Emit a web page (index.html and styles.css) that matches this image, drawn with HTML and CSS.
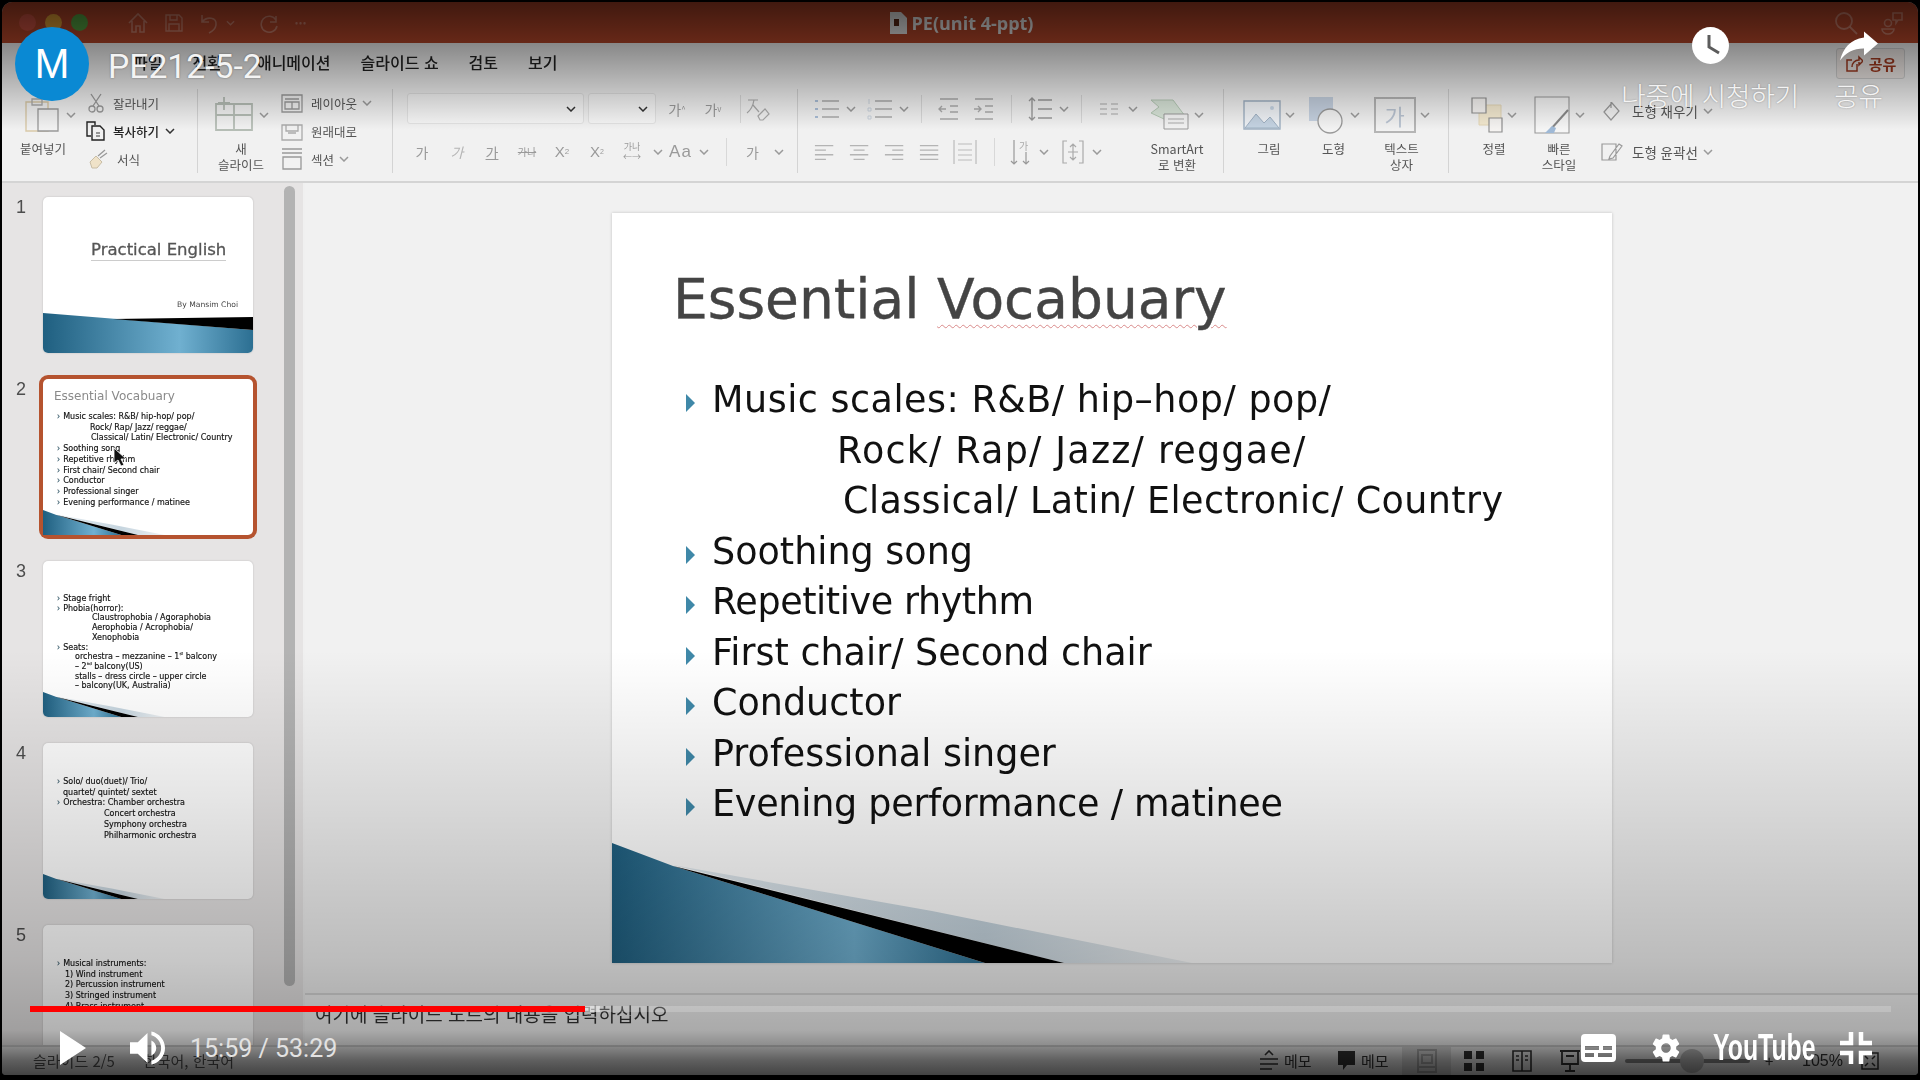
FILE: index.html
```html
<!DOCTYPE html>
<html lang="ko">
<head>
    <meta charset="UTF-8">
    <title>PE212-5-2</title>
    <link rel="stylesheet" href="styles.css">
</head>
<body>
<svg class="defs" width="0" height="0">
    <symbol id="chev" viewBox="0 0 10 6"><polyline points="1,1 5,5 9,1" fill="none" stroke="currentColor" stroke-width="1.5"/></symbol>
    <symbol id="center" viewBox="0 0 24 20"><path d="M1 3h20M5 8h12M1 13h20M5 18h12" stroke="currentColor" stroke-width="1.5" fill="none"/></symbol>
    <symbol id="left" viewBox="0 0 24 20"><path d="M1 3h20M1 8h12M1 13h20M1 18h12" stroke="currentColor" stroke-width="1.5" fill="none"/></symbol>
    <symbol id="right" viewBox="0 0 24 20"><path d="M1 3h20M9 8h12M1 13h20M9 18h12" stroke="currentColor" stroke-width="1.5" fill="none"/></symbol>
    <symbol id="justify" viewBox="0 0 24 20"><path d="M1 3h20M1 8h20M1 13h20M1 18h20" stroke="currentColor" stroke-width="1.5" fill="none"/></symbol>
    <linearGradient id="blue" x1="0" x2="1" y1="0" y2="0">
        <stop offset="0" stop-color="#1f5f80"/>
        <stop offset=".65" stop-color="#70b0d0"/>
        <stop offset="1" stop-color="#2c6f92"/>
    </linearGradient>
    <linearGradient id="pale" x1="0" x2="1" y1="0" y2="0">
        <stop offset="0" stop-color="#e4ecf1"/>
        <stop offset=".6" stop-color="#c6d5df"/>
        <stop offset="1" stop-color="#eef1f3"/>
    </linearGradient>
    <symbol id="swoosh" viewBox="0 0 1000 120" preserveAspectRatio="none">
        <polygon points="61,22 320,68 580,120 452,120" fill="url(#pale)"/>
        <polygon points="0,0 61,23 373,120 0,120" fill="url(#blue)"/>
        <polygon points="61,23 452,120 373,120" fill="#000"/>
    </symbol>
</svg>

<div class="player">
    <div class="app">
        <header class="titlebar">
            <div class="title-left">
                <span class="light light-red"></span>
                <span class="light light-yellow"></span>
                <span class="light light-green"></span>
                <div class="quick">
                    <svg width="22" height="22" viewBox="0 0 22 22" fill="none" stroke="currentColor" stroke-width="1.6"><path d="M2 11L11 2l9 9M5 9v11h4v-6h4v6h4V9"/></svg>
                    <svg width="20" height="20" viewBox="0 0 20 20" fill="none" stroke="currentColor" stroke-width="1.4"><path d="M2 2h13l3 3v13H2zM6 2v5h7V2M5 18v-7h10v7"/></svg>
                    <svg width="22" height="22" viewBox="0 0 22 22" fill="none" stroke="currentColor" stroke-width="1.6"><path d="M3 3v7h7M3 10c5-6 15-5 14 3-.4 3-3 6-7 8"/></svg>
                    <svg class="quick-chev" width="9" height="6"><use href="#chev"/></svg>
                    <svg width="22" height="22" viewBox="0 0 22 22" fill="none" stroke="currentColor" stroke-width="1.6"><path d="M18 4v6h-6M18 8a8 8 0 1 0 1 6"/></svg>
                    <span class="quick-dots">•••</span>
                </div>
            </div>
            <div class="doc-title">
                <svg width="17" height="22" viewBox="0 0 17 22"><path d="M0 0h11l6 6v16H0z" fill="currentColor"/><path d="M4 7h5v7H4z" fill="#5c2714"/></svg>
                <span>PE(unit 4-ppt)</span>
            </div>
            <div class="title-right">
                <svg width="24" height="24" viewBox="0 0 24 24" fill="none" stroke="currentColor" stroke-width="1.8"><circle cx="10" cy="10" r="8"/><path d="M16 16l7 7"/></svg>
                <svg width="24" height="24" viewBox="0 0 24 24" fill="none" stroke="currentColor" stroke-width="1.6"><circle cx="8" cy="12" r="3.5"/><path d="M2 18h12c0 3-3 5-6 5s-6-2-6-5zM13 2h9v7h-4l-2 3V9h-3z"/></svg>
            </div>
        </header>

        <section class="ribbon">
            <nav class="tabs">
                <span class="tab">파일</span>
                <span class="tab tab-wider">전환</span>
                <span class="tab">애니메이션</span>
                <span class="tab">슬라이드 쇼</span>
                <span class="tab">검토</span>
                <span class="tab">보기</span>
            </nav>
            <div class="groups">
                <div class="group group-paste">
                    <div class="big big-paste">
                        <div class="big-icon">
                            <svg width="38" height="36" viewBox="0 0 38 36" fill="none"><path d="M2 5h22v29H2z" stroke="#d9c9a8" stroke-width="1.4"/><path d="M8 2h10v6H8z" stroke="#aaa" stroke-width="1.3"/><path d="M14 12h20v22H14z" fill="#f2f2f2" stroke="#999" stroke-width="1.3"/></svg>
                            <svg class="chev" width="10" height="6"><use href="#chev"/></svg>
                        </div>
                        <div class="big-label">붙여넣기</div>
                    </div>
                    <div class="small-list">
                        <div class="small-row">
                            <svg width="16" height="20" viewBox="0 0 16 20" fill="none" stroke="#999" stroke-width="1.3"><path d="M3 1l8 12M13 1L5 13"/><circle cx="4" cy="16" r="3"/><circle cx="12" cy="16" r="3"/></svg>
                            <span>잘라내기</span>
                        </div>
                        <div class="small-row small-strong">
                            <svg width="20" height="20" viewBox="0 0 20 20" fill="none" stroke="#222" stroke-width="1.4"><path d="M5 15H1V1h8v3"/><path d="M6 5h8l4 4v10H6z"/><path d="M10 12h4M10 15h4" stroke="#777"/></svg>
                            <span>복사하기</span>
                            <svg class="chev chev-dark" width="10" height="6"><use href="#chev"/></svg>
                        </div>
                        <div class="small-row">
                            <svg width="20" height="20" viewBox="0 0 20 20" fill="none"><path d="M2 13l6-6 6 6-5 6H4z" fill="#efe2c8" stroke="#c8bda5"/><path d="M10 7l7-6M12 9l7-5" stroke="#999" stroke-width="1.3"/></svg>
                            <span>서식</span>
                        </div>
                    </div>
                </div>

                <div class="group group-slide">
                    <div class="big big-new">
                        <div class="big-icon">
                            <svg width="42" height="36" viewBox="0 0 42 36" fill="none" stroke="#b5bdb5" stroke-width="1.8"><path d="M3 7h36v26H3zM21 7v26M3 18h36M11 0v13M5 6h12"/></svg>
                            <svg class="chev" width="10" height="6"><use href="#chev"/></svg>
                        </div>
                        <div class="big-label">새<br>슬라이드</div>
                    </div>
                    <div class="small-list small-list-slide">
                        <div class="small-row">
                            <svg width="22" height="19" viewBox="0 0 22 19" fill="none" stroke="#999" stroke-width="1.3"><path d="M1 1h20v17H1zM4 5h14M4 8h14v7H4zM11 8v7"/></svg>
                            <span>레이아웃</span>
                            <svg class="chev" width="10" height="6"><use href="#chev"/></svg>
                        </div>
                        <div class="small-row">
                            <svg width="22" height="19" viewBox="0 0 22 19" fill="none" stroke="#aaa" stroke-width="1.3"><path d="M1 3h20v15H1zM5 3v6h12V3M7 11h8"/></svg>
                            <span>원래대로</span>
                        </div>
                        <div class="small-row">
                            <svg width="22" height="22" viewBox="0 0 22 22" fill="none" stroke="#999" stroke-width="1.3"><path d="M1 1h20M1 5h20M2 9h18v12H2z"/></svg>
                            <span>섹션</span>
                            <svg class="chev" width="10" height="6"><use href="#chev"/></svg>
                        </div>
                    </div>
                </div>

                <div class="group group-font">
                    <div class="tool-rows">
                        <div class="tool-row">
                            <div class="select select-font"><svg class="chev chev-dark" width="10" height="6"><use href="#chev"/></svg></div>
                            <div class="select select-size"><svg class="chev chev-dark" width="10" height="6"><use href="#chev"/></svg></div>
                            <span class="tool w36 ml3">가<sup>^</sup></span>
                            <span class="tool w36">가<sup>v</sup></span>
                            <span class="vsep vsep-font"></span>
                            <span class="tool w34">
                                <svg width="26" height="26" viewBox="0 0 26 26" fill="none" stroke="#aaa" stroke-width="1.2"><path d="M13 20l7-7 4 5-6 6h-3zM3 4h10M9 4c-1 6-3 10-7 13M8 9l6 7"/></svg>
                            </span>
                        </div>
                        <div class="tool-row row-shift">
                            <span class="tool w35">가</span>
                            <span class="tool w35 tool-italic">가</span>
                            <span class="tool w35 tool-under">가</span>
                            <span class="tool w35 tool-strike">가나</span>
                            <span class="tool w35 tool-latin">X<sup>2</sup></span>
                            <span class="tool w35 tool-latin">X<sub>2</sub></span>
                            <span class="tool w35 tool-tiny">가나<br>←→</span>
                            <span class="chev-slot"><svg class="chev" width="10" height="6"><use href="#chev"/></svg></span>
                            <span class="tool w30 tool-aa">Aa</span>
                            <span class="chev-slot"><svg class="chev" width="10" height="6"><use href="#chev"/></svg></span>
                            <span class="vsep vsep-color"></span>
                            <span class="tool w36 ml8">가</span>
                            <span class="chev-slot"><svg class="chev" width="10" height="6"><use href="#chev"/></svg></span>
                        </div>
                    </div>
                </div>

                <div class="group group-para">
                    <div class="tool-rows para-rows">
                        <div class="tool-row para-top">
                            <span class="tool w32">
                                <svg width="26" height="24" viewBox="0 0 26 24"><path d="M8 4h17M8 12h17M8 20h17" stroke="#aaa" stroke-width="1.5"/><path d="M1 3h3v2H1zM1 11h3v2H1zM1 19h3v2H1z" fill="#a9bdd6"/></svg>
                            </span>
                            <span class="chev-slot"><svg class="chev" width="10" height="6"><use href="#chev"/></svg></span>
                            <span class="tool w32 ml5">
                                <svg width="26" height="24" viewBox="0 0 26 24"><path d="M8 4h17M8 12h17M8 20h17" stroke="#aaa" stroke-width="1.5"/><path d="M2 2v5M1 11h3v3H1zM1 19h3v3H1z" stroke="#c9d2dc" fill="none"/></svg>
                            </span>
                            <span class="chev-slot"><svg class="chev" width="10" height="6"><use href="#chev"/></svg></span>
                            <span class="vsep ml9"></span>
                            <span class="tool w35 ml9">
                                <svg width="22" height="24" viewBox="0 0 22 24" fill="none" stroke="#aaa" stroke-width="1.4"><path d="M2 2h18M12 9h8M12 15h8M2 22h18M8 12H1M4 9l-3 3 3 3"/></svg>
                            </span>
                            <span class="tool w35">
                                <svg width="22" height="24" viewBox="0 0 22 24" fill="none" stroke="#aaa" stroke-width="1.4"><path d="M2 2h18M12 9h8M12 15h8M2 22h18M1 12h7M5 9l3 3-3 3"/></svg>
                            </span>
                            <span class="vsep ml10"></span>
                            <span class="tool w32 ml12">
                                <svg width="24" height="26" viewBox="0 0 24 26" fill="none" stroke="#999" stroke-width="1.4"><path d="M10 4h14M10 13h14M10 22h14M4 2v22M1 5l3-3 3 3M1 21l3 3 3-3"/></svg>
                            </span>
                            <span class="chev-slot"><svg class="chev" width="10" height="6"><use href="#chev"/></svg></span>
                            <span class="vsep ml9"></span>
                            <span class="tool w32 ml11">
                                <svg width="18" height="14" viewBox="0 0 18 14" stroke="#c0c0c0" stroke-width="1.3" fill="none"><path d="M0 2h7M0 7h7M0 12h7M11 2h7M11 7h7M11 12h7"/></svg>
                            </span>
                            <span class="chev-slot"><svg class="chev" width="10" height="6"><use href="#chev"/></svg></span>
                        </div>
                        <div class="tool-row row-para-bottom">
                            <span class="tool w35"><svg class="align-icon" width="22" height="20"><use href="#left"/></svg></span>
                            <span class="tool w35"><svg class="align-icon" width="22" height="20"><use href="#center"/></svg></span>
                            <span class="tool w35"><svg class="align-icon" width="22" height="20"><use href="#right"/></svg></span>
                            <span class="tool w35"><svg class="align-icon" width="22" height="20"><use href="#justify"/></svg></span>
                            <span class="tool w35">
                                <svg width="24" height="26" viewBox="0 0 24 26" fill="none" stroke="#bbb" stroke-width="1.2"><path d="M1 1v24M23 1v24M5 5h14M5 11h14M5 16h14M5 21h14"/></svg>
                            </span>
                            <span class="vsep ml11"></span>
                            <span class="tool w32 ml9">
                                <svg width="20" height="28" viewBox="0 0 20 28" fill="none" stroke="#999" stroke-width="1.2"><path d="M4 2v24M1 23l3 3 3-3M16 14v12M13 23l3 3 3-3"/><text x="9" y="12" font-size="10" fill="#aaa" stroke="none">가</text></svg>
                            </span>
                            <span class="chev-slot"><svg class="chev" width="10" height="6"><use href="#chev"/></svg></span>
                            <span class="tool w32 ml5">
                                <svg width="24" height="26" viewBox="0 0 24 26" fill="none" stroke="#aaa" stroke-width="1.2"><path d="M6 2H2v22h4M18 2h4v22h-4M12 5v16M9 8l3-3 3 3M9 18l3 3 3-3M7 13h10"/></svg>
                            </span>
                            <span class="chev-slot"><svg class="chev" width="10" height="6"><use href="#chev"/></svg></span>
                        </div>
                    </div>
                    <div class="big big-smart">
                        <div class="big-icon">
                            <svg width="40" height="32" viewBox="0 0 40 32"><path d="M1 1h22l12 16H26L14 20 1 14l8-6z" fill="#d8e4d8" stroke="#b4c8b4"/><path d="M14 15h24v15H14z" fill="#f2f2f2" stroke="#999"/><path d="M18 20h16M18 24h16" stroke="#aaa"/></svg>
                            <svg class="chev" width="10" height="6"><use href="#chev"/></svg>
                        </div>
                        <div class="big-label">SmartArt<br>로 변환</div>
                    </div>
                </div>

                <div class="group group-insert">
                    <div class="big big-pic">
                        <div class="big-icon">
                            <svg width="38" height="30" viewBox="0 0 38 30"><path d="M1 1h36v28H1z" fill="#eef1f5" stroke="#9fb0c2" stroke-width="1.4"/><path d="M2 28l11-14 8 9 6-6 9 11z" fill="#c4d3e2" stroke="#9fb0c2"/><circle cx="29" cy="8" r="2" fill="#c4d3e2"/></svg>
                            <svg class="chev" width="10" height="6"><use href="#chev"/></svg>
                        </div>
                        <div class="big-label">그림</div>
                    </div>
                    <div class="big big-shape">
                        <div class="big-icon">
                            <svg width="38" height="38" viewBox="0 0 38 38"><path d="M1 1h24v24H1z" fill="#c5d1e0"/><circle cx="22" cy="25" r="12" fill="#f3f3f3" stroke="#999" stroke-width="1.3"/></svg>
                            <svg class="chev" width="10" height="6"><use href="#chev"/></svg>
                        </div>
                        <div class="big-label">도형</div>
                    </div>
                    <div class="big big-textbox">
                        <div class="big-icon">
                            <div class="textbox-icon">가</div>
                            <svg class="chev" width="10" height="6"><use href="#chev"/></svg>
                        </div>
                        <div class="big-label">텍스트<br>상자</div>
                    </div>
                </div>

                <div class="group group-arrange">
                    <div class="big big-arrange">
                        <div class="big-icon">
                            <svg width="32" height="36" viewBox="0 0 32 36"><path d="M8 8h22v20H8z" fill="#f2e8cf" stroke="#e3d6b6"/><path d="M1 1h14v15H1zM18 21h13v14H18z" fill="#f5f3f1" stroke="#8f8f8f" stroke-width="1.2"/></svg>
                            <svg class="chev" width="10" height="6"><use href="#chev"/></svg>
                        </div>
                        <div class="big-label">정렬</div>
                    </div>
                    <div class="big big-quick">
                        <div class="big-icon">
                            <svg width="38" height="38" viewBox="0 0 38 38"><path d="M2 1h34v36H2z" fill="#f5f5f5" stroke="#999" stroke-width="1.1"/><path d="M35 14L18 33" stroke="#888" stroke-width="2"/><path d="M19 30l-7 7h9l2-5z" fill="#9fb9d6"/></svg>
                            <svg class="chev" width="10" height="6"><use href="#chev"/></svg>
                        </div>
                        <div class="big-label">빠른<br>스타일</div>
                    </div>
                    <div class="small-list small-list-shape">
                        <div class="small-row">
                            <svg width="20" height="22" viewBox="0 0 20 22" fill="none" stroke="#999" stroke-width="1.2"><path d="M2 12l8-9 7 8-8 9zM9 2v6"/></svg>
                            <span>도형 채우기</span>
                            <svg class="chev" width="10" height="6"><use href="#chev"/></svg>
                        </div>
                        <div class="small-row">
                            <svg width="22" height="20" viewBox="0 0 22 20" fill="none" stroke="#999" stroke-width="1.2"><path d="M1 2h14v16H1zM9 14l9-12 3 2-9 12-4 1z"/></svg>
                            <span>도형 윤곽선</span>
                            <svg class="chev" width="10" height="6"><use href="#chev"/></svg>
                        </div>
                    </div>
                </div>
            </div>
            <div class="share-btn">
                <svg width="18" height="18" viewBox="0 0 18 18" fill="none" stroke="currentColor" stroke-width="1.5"><path d="M12 9v7H2V5h5M7 12c0-4 3-7 7-7V2l4 4-4 4V7"/></svg>
                <span>공유</span>
            </div>
        </section>

        <main class="workspace">
            <aside class="thumbs">
                <div class="thumb-list">
                    <div class="thumb-item">
                        <span class="thumb-num">1</span>
                        <div class="thumb">
                            <div class="mini-title-page">Practical English</div>
                            <div class="mini-byline">By Mansim Choi</div>
                            <svg class="cover-art" viewBox="0 0 210 40" preserveAspectRatio="none">
                                <polygon points="0,0 210,17 210,40 0,40" fill="url(#blue)"/>
                                <polygon points="70,6 210,4 210,17" fill="#000"/>
                            </svg>
                        </div>
                    </div>
                    <div class="thumb-item">
                        <span class="thumb-num">2</span>
                        <div class="thumb thumb-active">
                            <div class="mini-title">Essential Vocabuary</div>
                            <ul class="mini-text mini-text-2">
                                <li class="bul">Music scales: R&amp;B/ hip-hop/ pop/</li>
                                <li class="in-a">Rock/ Rap/ Jazz/ reggae/</li>
                                <li class="in-b">Classical/ Latin/ Electronic/ Country</li>
                                <li class="bul">Soothing song</li>
                                <li class="bul">Repetitive rhythm</li>
                                <li class="bul">First chair/ Second chair</li>
                                <li class="bul">Conductor</li>
                                <li class="bul">Professional singer</li>
                                <li class="bul">Evening performance / matinee</li>
                            </ul>
                            <svg class="mini-swoosh"><use href="#swoosh"/></svg>
                            <svg class="cursor" width="14" height="20" viewBox="0 0 14 20"><path d="M1 1v15l4-3 3 6 3-1-3-6h5z" fill="#111" stroke="#fff" stroke-width=".8"/></svg>
                        </div>
                    </div>
                    <div class="thumb-item">
                        <span class="thumb-num">3</span>
                        <div class="thumb">
                            <ul class="mini-text mini-text-3">
                                <li class="bul">Stage fright</li>
                                <li class="bul">Phobia(horror):</li>
                                <li class="in-c">Claustrophobia / Agoraphobia</li>
                                <li class="in-c">Aerophobia / Acrophobia/</li>
                                <li class="in-c">Xenophobia</li>
                                <li class="bul">Seats:</li>
                                <li class="in-d">orchestra – mezzanine – 1<sup>st</sup> balcony</li>
                                <li class="in-d">– 2<sup>nd</sup> balcony(US)</li>
                                <li class="in-d">stalls – dress circle – upper circle</li>
                                <li class="in-d">– balcony(UK, Australia)</li>
                            </ul>
                            <svg class="mini-swoosh"><use href="#swoosh"/></svg>
                        </div>
                    </div>
                    <div class="thumb-item">
                        <span class="thumb-num">4</span>
                        <div class="thumb">
                            <ul class="mini-text mini-text-4">
                                <li class="bul">Solo/ duo(duet)/ Trio/</li>
                                <li class="in-e">quartet/ quintet/ sextet</li>
                                <li class="bul">Orchestra: Chamber orchestra</li>
                                <li class="in-f">Concert orchestra</li>
                                <li class="in-f">Symphony orchestra</li>
                                <li class="in-f">Philharmonic orchestra</li>
                            </ul>
                            <svg class="mini-swoosh"><use href="#swoosh"/></svg>
                        </div>
                    </div>
                    <div class="thumb-item">
                        <span class="thumb-num">5</span>
                        <div class="thumb">
                            <ul class="mini-text mini-text-4">
                                <li class="bul">Musical instruments:</li>
                                <li class="in-g">1) Wind instrument</li>
                                <li class="in-g">2) Percussion instrument</li>
                                <li class="in-g">3) Stringed instrument</li>
                                <li class="in-g">4) Brass instrument</li>
                            </ul>
                        </div>
                    </div>
                </div>
                <div class="scrollbar"></div>
            </aside>

            <div class="editor">
                <div class="canvas">
                    <article class="slide">
                        <h2 class="slide-title">Essential <span class="typo">Vocabuary</span></h2>
                        <ul class="slide-body">
                            <li class="bullet wide-a">Music scales: R&amp;B/ hip–hop/ pop/</li>
                            <li class="cont-a">Rock/ Rap/ Jazz/ reggae/</li>
                            <li class="cont-b">Classical/ Latin/ Electronic/ Country</li>
                            <li class="bullet">Soothing song</li>
                            <li class="bullet tight">Repetitive rhythm</li>
                            <li class="bullet">First chair/ Second chair</li>
                            <li class="bullet">Conductor</li>
                            <li class="bullet">Professional singer</li>
                            <li class="bullet tight-b">Evening performance / matinee</li>
                        </ul>
                        <svg class="slide-swoosh"><use href="#swoosh"/></svg>
                    </article>
                </div>
                <div class="notes">여기에 슬라이드 노트의 내용을 입력하십시오</div>
            </div>
        </main>

        <footer class="statusbar">
            <div class="status-left">
                <span>슬라이드 2/5</span>
                <span>한국어, 한국어</span>
            </div>
            <div class="status-right">
                <span class="status-item status-notes">
                    <svg width="18" height="22" viewBox="0 0 18 22" fill="none" stroke="currentColor" stroke-width="1.6"><path d="M0 9h18M0 14h18M0 19h12M5 5l4-4 4 4" /></svg>
                    메모
                </span>
                <span class="status-item status-comment">
                    <svg width="17" height="20" viewBox="0 0 17 20" fill="currentColor"><path d="M0 0h17v14H9l-4 5v-5H0z"/></svg>
                    메모
                </span>
                <span class="view view-active">
                    <svg width="20" height="24" viewBox="0 0 20 24" fill="none" stroke="currentColor" stroke-width="2"><path d="M1 1h18v22H1zM5 6h10v8H5zM1 18h18"/></svg>
                </span>
                <span class="view view-grid">
                    <svg width="20" height="20" viewBox="0 0 20 20" fill="currentColor"><path d="M0 0h8v8H0zM12 0h8v8h-8zM0 12h8v8H0zM12 12h8v8h-8z"/></svg>
                </span>
                <span class="view view-read">
                    <svg width="20" height="22" viewBox="0 0 20 22" fill="none" stroke="currentColor" stroke-width="1.6"><path d="M1 1h18v20H1zM10 1v20M4 6h3M4 10h3M13 6h3M13 10h3"/></svg>
                </span>
                <span class="view view-show">
                    <svg width="20" height="24" viewBox="0 0 20 24" fill="none" stroke="currentColor" stroke-width="1.8"><path d="M0 2h20M2 2v13h16V2M10 15v7M5 22h10M6 7h8"/></svg>
                </span>
                <span class="zoom-minus">−</span>
                <span class="zoom-track"><span class="zoom-knob"></span></span>
                <span class="zoom-plus">+</span>
                <span class="zoom-text">105%</span>
                <span class="view view-fit">
                    <svg width="18" height="18" viewBox="0 0 18 18" fill="none" stroke="currentColor" stroke-width="1.5"><path d="M1 1h16v16H1zM4 4l3 3M14 4l-3 3M4 14l3-3M14 14l-3-3"/></svg>
                </span>
            </div>
        </footer>
    </div>

    <!-- youtube chrome on top of the video -->
    <div class="shade-top"></div>
    <div class="shade-bottom"></div>

    <div class="yt-head">
        <div class="yt-avatar">M</div>
        <div class="yt-title">PE212-5-2</div>
    </div>

    <div class="yt-actions">
        <div class="yt-action">
            <svg class="yt-action-icon" width="37" height="37" viewBox="0 0 37 37"><circle cx="18.5" cy="18.5" r="18.5" fill="#fff"/><path d="M17 8v12l10 6" fill="none" stroke="#5c5c5c" stroke-width="3"/></svg>
            <span>나중에 시청하기</span>
        </div>
        <div class="yt-action">
            <svg class="yt-action-icon" width="42" height="37" viewBox="0 0 42 34"><path d="M26 3l14 12-14 12v-7C15 20 8 24 2 32 5 20 12 11 26 9z" fill="#fff"/></svg>
            <span>공유</span>
        </div>
    </div>

    <div class="yt-bottom">
        <div class="progress">
            <div class="progress-played"></div>
            <div class="progress-loaded"></div>
        </div>
        <div class="controls">
            <svg class="ctl-play" width="26" height="34" viewBox="0 0 26 34"><path d="M0 0l26 17L0 34z" fill="#fff"/></svg>
            <svg class="ctl-volume" width="35" height="34" viewBox="8 9 18 18" preserveAspectRatio="none"><path d="M8,21 L12,21 L17,26 L17,10 L12,15 L8,15 L8,21 Z M19,14 L19,22 C20.48,21.32 21.5,19.77 21.5,18 C21.5,16.26 20.48,14.74 19,14 Z M19,11.29 C21.89,12.15 24,14.83 24,18 C24,21.17 21.89,23.85 19,24.71 L19,26.77 C23.01,25.86 26,22.28 26,18 C26,13.72 23.01,10.14 19,9.23 L19,11.29 Z" fill="#fff"/></svg>
            <span class="ctl-time">15:59 / 53:29</span>
            <svg class="ctl-cc" width="35" height="28" viewBox="0 0 35 28"><path fill-rule="evenodd" d="M4 0h27a4 4 0 0 1 4 4v20a4 4 0 0 1-4 4H4a4 4 0 0 1-4-4V4a4 4 0 0 1 4-4zM4 12v4h14v-4zM22 12v4h9v-4zM4 19v4h9v-4zM17 19v4h14v-4z" fill="#fff"/></svg>
            <svg class="ctl-gear" width="34" height="34" viewBox="8 8 20 20"><path d="m 23.94,18.78 c .03,-0.25 .05,-0.51 .05,-0.78 0,-0.27 -0.02,-0.52 -0.05,-0.78 l 1.68,-1.32 c .15,-0.12 .19,-0.33 .09,-0.51 l -1.6,-2.76 c -0.09,-0.17 -0.31,-0.24 -0.48,-0.17 l -1.99,.8 c -0.41,-0.32 -0.86,-0.58 -1.35,-0.78 l -0.30,-2.12 c -0.02,-0.19 -0.19,-0.33 -0.39,-0.33 l -3.2,0 c -0.2,0 -0.36,.14 -0.39,.33 l -0.30,2.12 c -0.48,.2 -0.93,.47 -1.35,.78 l -1.99,-0.8 c -0.18,-0.07 -0.39,0 -0.48,.17 l -1.6,2.76 c -0.10,.17 -0.05,.39 .09,.51 l 1.68,1.32 c -0.03,.25 -0.05,.52 -0.05,.78 0,.26 .02,.52 .05,.78 l -1.68,1.32 c -0.15,.12 -0.19,.33 -0.09,.51 l 1.6,2.76 c .09,.17 .31,.24 .48,.17 l 1.99,-0.8 c .41,.32 .86,.58 1.35,.78 l .30,2.12 c .02,.19 .19,.33 .39,.33 l 3.2,0 c .2,0 .36,-0.14 .39,-0.33 l .30,-2.12 c .48,-0.2 .93,-0.47 1.35,-0.78 l 1.99,.8 c .18,.07 .39,0 .48,-0.17 l 1.6,-2.76 c .09,-0.17 .05,-0.39 -0.09,-0.51 l -1.68,-1.32 0,0 z m -5.94,2.01 c -1.54,0 -2.8,-1.25 -2.8,-2.8 0,-1.54 1.25,-2.8 2.8,-2.8 1.54,0 2.8,1.25 2.8,2.8 0,1.54 -1.25,2.8 -2.8,2.8 l 0,0 z" fill="#fff"/></svg>
            <span class="ctl-logo"><span class="ctl-logo-text">YouTube</span></span>
            <svg class="ctl-exit" width="32" height="32" viewBox="0 0 32 32" fill="none" stroke="#fff" stroke-width="4.5"><path d="M11 0v11H0M21 0v11h11M11 32V21H0M21 32V21h11"/></svg>
        </div>
    </div>
</div>
</body>
</html>
```

FILE: styles.css
```css
* {
    box-sizing: border-box;
}
html, body {
    margin: 0;
    padding: 0;
    background: #000;
}
body {
    font-family: "Noto Sans CJK KR", "Noto Sans", sans-serif;
    overflow: hidden;
}
.defs {
    position: absolute;
}
ul {
    list-style: none;
    margin: 0;
    padding: 0;
}

.player {
    position: relative;
    width: 1920px;
    height: 1080px;
    padding: 2px 2px 5px;
    background: #000;
    overflow: hidden;
}
.app {
    display: flex;
    flex-direction: column;
    height: 100%;
    background: #f1f1f1;
    border-radius: 10px 10px 4px 4px;
    overflow: hidden;
}

/* title bar */
.titlebar {
    display: flex;
    align-items: center;
    flex: 0 0 41px;
    background: #b7472a;
    color: #fff;
    filter: blur(.6px);
}
.title-left {
    display: flex;
    align-items: center;
    flex: 1;
    padding-left: 17px;
}
.light {
    width: 17px;
    height: 17px;
    border-radius: 50%;
    margin-right: 9px;
    opacity: .8;
}
.light-red { background: #d8574a; }
.light-yellow { background: #f0b93a; }
.light-green { background: #3fbf4a; }
.quick {
    display: flex;
    align-items: center;
    gap: 15px;
    margin-left: 30px;
    color: rgba(255, 255, 255, .32);
}
.quick-chev {
    margin: 0 8px 0 -10px;
}
.quick-dots {
    font-size: 9px;
    letter-spacing: 1px;
    margin-left: 0;
}
.doc-title {
    display: flex;
    align-items: center;
    gap: 5px;
    font-family: "Open Sans", sans-serif;
    font-weight: 700;
    font-size: 18px;
    color: #eee;
}
.title-right {
    display: flex;
    flex: 1;
    justify-content: flex-end;
    gap: 22px;
    padding-right: 14px;
    color: rgba(255, 255, 255, .32);
}

/* ribbon */
.ribbon {
    position: relative;
    flex: 0 0 140px;
    background: #f1f1f1;
    border-bottom: 2px solid #d4d4d4;
    color: #555;
    filter: blur(.5px);
}
.tabs {
    display: flex;
    gap: 30px;
    height: 45px;
    padding: 8px 0 0 131px;
    font-size: 16px;
    line-height: 22px;
    font-weight: 500;
    color: #222;
}
.tab-wider {
    margin-right: 5px;
}
.groups {
    display: flex;
    height: 84px;
    margin-top: 1px;
}
.group {
    display: flex;
    border-right: 1px solid #d4d4d4;
    font-size: 12.5px;
}
.group-paste { width: 196px; padding-left: 16px; }
.group-slide { width: 195px; padding-left: 12px; }
.group-font { width: 405px; padding-left: 14px; }
.group-para { width: 426px; padding-left: 14px; }
.group-insert { width: 225px; padding-left: 10px; }
.group-arrange { flex: 1; padding-left: 10px; border-right: none; }

.big {
    display: flex;
    flex-direction: column;
    align-items: center;
}
.big-icon {
    display: flex;
    align-items: center;
    gap: 4px;
    height: 52px;
}
.big-label {
    font-size: 12.5px;
    line-height: 16px;
    text-align: center;
}
.big-paste {
    align-items: flex-start;
    width: 70px;
}
.big-paste .big-icon { margin-left: 6px; }
.big-paste .big-label { margin-left: 2px; }
.big-new { width: 62px; }
.big-smart { width: 72px; }
.big-pic { width: 70px; }
.big-shape { width: 59px; }
.big-textbox { width: 77px; }
.big-arrange { width: 70px; }
.big-quick { width: 60px; }

.chev {
    flex: none;
    color: #9a9a9a;
}
.chev-dark {
    color: #333;
}
.chev-slot {
    display: flex;
    align-items: center;
    justify-content: center;
    width: 16px;
}

.small-list {
    display: flex;
    flex-direction: column;
}
.small-list-slide {
    margin-left: 9px;
}
.small-list-shape {
    margin-left: 11px;
    padding-top: 1px;
}
.small-row {
    display: flex;
    align-items: center;
    gap: 9px;
    height: 29px;
    white-space: nowrap;
}
.small-row svg:first-child {
    flex: none;
}
.small-row .chev {
    margin-left: -3px;
}
.small-strong {
    color: #222;
    font-weight: 500;
}
.small-strong svg:first-child {
    margin-left: -2px;
    margin-right: -2px;
}
.small-list-slide .small-row {
    gap: 8px;
}
.small-list-shape .small-row {
    height: 43px;
    gap: 8px;
    font-size: 13.5px;
}
.small-list-shape svg:first-child {
    width: 24px;
}

.tool-rows {
    display: flex;
    flex-direction: column;
    gap: 12px;
    padding-top: 4px;
}
.para-rows {
    width: 329px;
}
.tool-row {
    display: flex;
    align-items: center;
    height: 31px;
    white-space: nowrap;
}
.row-shift {
    margin-left: -2.5px;
}
.para-top {
    margin-left: -1px;
}
.row-para-bottom {
    margin-left: -4.5px;
}
.select {
    display: flex;
    align-items: center;
    justify-content: flex-end;
    height: 31px;
    padding-right: 7px;
    background: #f6f6f6;
    border: 1px solid #e2e2e2;
    border-radius: 3px;
}
.select-font { width: 177px; margin-right: 4px; }
.select-size { width: 68px; }
.tool {
    display: flex;
    align-items: center;
    justify-content: center;
    font-size: 14px;
    line-height: 14px;
    color: #9a9a9a;
}
.tool sup {
    font-size: 8px;
    align-self: flex-start;
}
.tool sub {
    font-size: 7px;
    align-self: flex-end;
}
.w30 { width: 30px; }
.w32 { width: 32px; }
.w34 { width: 34px; }
.w35 { width: 35px; }
.w36 { width: 36px; }
.ml3 { margin-left: 3px; }
.ml5 { margin-left: 5px; }
.ml8 { margin-left: 8px; }
.ml9 { margin-left: 9px; }
.ml10 { margin-left: 10px; }
.ml11 { margin-left: 11px; }
.ml12 { margin-left: 12px; }
.tool-italic { font-style: italic; color: #b5b5b5; }
.tool-under { text-decoration: underline; }
.tool-strike { text-decoration: line-through; font-size: 10px; }
.tool-latin { font-family: "Liberation Sans", sans-serif; font-size: 15px; }
.tool-tiny { font-size: 9px; line-height: 10px; text-align: center; }
.tool-aa { font-family: "Liberation Sans", sans-serif; font-size: 17px; letter-spacing: 1px; }
.align-icon { color: #b4b4b4; }
.vsep {
    flex: none;
    width: 1px;
    height: 28px;
    background: #d8d8d8;
}
.vsep-font { margin-left: 9px; }
.vsep-color { margin-left: 14px; }
.textbox-icon {
    display: flex;
    align-items: center;
    justify-content: center;
    width: 42px;
    height: 36px;
    border: 2px solid #b5b5b5;
    font-size: 22px;
    color: #b8c2d0;
}
.share-btn {
    display: flex;
    position: absolute;
    top: 5px;
    right: 13px;
    align-items: center;
    justify-content: center;
    gap: 6px;
    width: 69px;
    height: 31px;
    background: #efe9e6;
    border: 1px solid #d0d0d0;
    border-radius: 3px;
    color: #a13a20;
    font-size: 15px;
    font-weight: 700;
}

/* middle part */
.workspace {
    display: flex;
    flex: 1;
    min-height: 0;
}
.thumbs {
    display: flex;
    flex: 0 0 303px;
    background: #e6e4e4;
    border-right: 2px solid #f0f0f0;
    filter: blur(.5px);
}
.thumb-list {
    display: flex;
    flex-direction: column;
    gap: 26px;
    width: 282px;
    padding-top: 14px;
}
.thumb-item {
    display: flex;
    flex: none;
    height: 156px;
}
.thumb-num {
    width: 41px;
    padding-left: 14px;
    font-family: "Liberation Sans", sans-serif;
    font-size: 18px;
    line-height: 20px;
    color: #4d4d4d;
}
.thumb {
    position: relative;
    width: 210px;
    height: 156px;
    background: #fff;
    border-radius: 5px;
    overflow: hidden;
    box-shadow: 0 0 2px rgba(0, 0, 0, .2);
}
.thumb-active {
    box-shadow: 0 0 0 4px #b5532f;
    overflow: visible;
}
.mini-title-page {
    position: absolute;
    top: 43px;
    left: 48px;
    padding-bottom: 1px;
    border-bottom: 1px solid #ccc;
    font-family: "DejaVu Sans", sans-serif;
    font-size: 16.5px;
    font-weight: 500;
    color: #555;
    white-space: nowrap;
    -webkit-text-stroke: .3px #555;
}
.mini-byline {
    position: absolute;
    top: 103px;
    right: 15px;
    font-family: "DejaVu Sans", sans-serif;
    font-size: 7.6px;
    color: #444;
}
.cover-art {
    position: absolute;
    left: 0;
    bottom: 0;
    width: 210px;
    height: 40px;
}
.mini-title {
    padding: 10px 0 0 11px;
    height: 33px;
    font-family: "DejaVu Sans", sans-serif;
    font-size: 12px;
    color: #8a8a8a;
}
.mini-text {
    font-family: "DejaVu Sans", sans-serif;
    font-size: 8px;
    color: #111;
    white-space: nowrap;
    -webkit-text-stroke: .15px #111;
}
.mini-text sup {
    font-size: 4px;
    line-height: 0;
}
.mini-text li {
    line-height: 10.7px;
}
.mini-text-2 { padding-left: 20px; }
.mini-text-3 { padding: 33px 0 0 20px; }
.mini-text-3 li { line-height: 9.7px; }
.mini-text-4 { padding: 34px 0 0 20px; }
.bul::before {
    content: "›";
    margin-left: -6px;
    margin-right: 3px;
    color: #4a86a0;
}
.in-a { padding-left: 27px; }
.in-b { padding-left: 28px; }
.in-c { padding-left: 29px; }
.in-d { padding-left: 12px; }
.in-e { padding-left: 0; }
.in-f { padding-left: 41px; }
.in-g { padding-left: 2px; }
.mini-swoosh {
    position: absolute;
    left: 0;
    bottom: 0;
    width: 210px;
    height: 25px;
}
.cursor {
    position: absolute;
    left: 70px;
    top: 68px;
}
.scrollbar {
    flex: none;
    width: 11px;
    height: 800px;
    margin-top: 3px;
    background: #b3b3b3;
    border-radius: 6px;
}

.editor {
    display: flex;
    flex-direction: column;
    flex: 1;
    min-width: 0;
}
.canvas {
    flex: 1;
    padding: 30px 0 0 307px;
    background: #f1f1f1;
}
.slide {
    position: relative;
    width: 1000px;
    height: 750px;
    padding: 46px 0 0 61px;
    background: #fff;
    box-shadow: 0 0 3px rgba(0, 0, 0, .2);
    filter: blur(.3px);
}
.slide-title {
    margin: 0;
    font-family: "DejaVu Sans", sans-serif;
    font-weight: 400;
    font-size: 55px;
    line-height: 80px;
    color: #444;
    -webkit-text-stroke: .4px #444;
}
.typo {
    text-decoration: underline wavy #d98a8a 1px;
    text-underline-offset: 6px;
}
.slide-body {
    margin: 0 0 0 13px;
    padding-top: 36px;
    font-family: "DejaVu Sans", sans-serif;
    font-size: 36.5px;
    line-height: 50.5px;
    color: #111;
    white-space: nowrap;
}
.bullet {
    display: flex;
    align-items: center;
    gap: 17px;
}
.bullet::before {
    content: "";
    margin-top: 6px;
    border-left: 9px solid #3f88a8;
    border-top: 9px solid transparent;
    border-bottom: 9px solid transparent;
}
.wide-a { letter-spacing: .5px; }
.tight { letter-spacing: -.4px; }
.tight-b { letter-spacing: -.25px; }
.cont-a { margin-left: 151px; letter-spacing: 1.2px; }
.cont-b { margin-left: 157px; letter-spacing: .4px; }
.slide-swoosh {
    position: absolute;
    left: 0;
    bottom: 0;
    width: 1000px;
    height: 120px;
}
.notes {
    flex: 0 0 52px;
    padding: 6px 0 0 10px;
    background: #f4f4f4;
    border-top: 2px solid #d8d8d8;
    font-size: 19px;
    line-height: 26px;
    color: #333;
    filter: blur(.4px);
}

/* status bar */
.statusbar {
    display: flex;
    justify-content: space-between;
    flex: 0 0 30px;
    background: #f0f0f0;
    border-top: 2px solid #d0d0d0;
    font-size: 15px;
    line-height: 28px;
    color: #555;
    filter: blur(.4px);
}
.status-left {
    display: flex;
    gap: 28px;
    padding-left: 31px;
}
.status-right {
    display: flex;
    align-items: center;
    height: 28px;
    padding-right: 39px;
    color: #333;
}
.status-item {
    display: flex;
    align-items: center;
    gap: 6px;
    white-space: nowrap;
}
.status-notes { width: 52px; }
.status-comment { width: 53px; margin-left: 26px; }
.view {
    display: flex;
    flex: none;
    align-items: center;
    justify-content: center;
    height: 28px;
}
.view-active {
    width: 49px;
    margin-left: 11px;
    background: #d8d8d8;
    color: #aaa;
}
.view-grid { width: 24px; margin-left: 11px; }
.view-read { width: 24px; margin-left: 24px; }
.view-show { width: 24px; margin-left: 24px; }
.zoom-minus { width: 14px; margin-left: 22px; }
.zoom-track {
    display: flex;
    align-items: center;
    justify-content: center;
    width: 125px;
    height: 4px;
    margin-left: 7px;
    background: #888;
    border-radius: 2px;
}
.zoom-knob {
    flex: none;
    width: 24px;
    height: 24px;
    margin-left: 8px;
    background: #bbb;
    border-radius: 50%;
}
.zoom-plus { width: 14px; margin-left: 15px; }
.zoom-text { width: 40px; margin-left: 23px; font-family: "Liberation Sans", sans-serif; font-size: 16px; }
.view-fit { width: 18px; margin-left: 19px; }

/* youtube overlay */
.shade-top, .shade-bottom {
    position: absolute;
    left: 0;
    right: 0;
    pointer-events: none;
}
.shade-top {
    top: 0;
    height: 130px;
    background: linear-gradient(to bottom, rgba(0, 0, 0, .66) 0, rgba(0, 0, 0, .44) 43px, rgba(0, 0, 0, 0) 130px);
}
.shade-bottom {
    top: 650px;
    bottom: 0;
    background: linear-gradient(to bottom, rgba(0, 0, 0, 0) 0, rgba(0, 0, 0, .1) 150px, rgba(0, 0, 0, .22) 310px, rgba(0, 0, 0, .3) 380px, rgba(0, 0, 0, .42) 395px, rgba(0, 0, 0, .6) 410px, rgba(0, 0, 0, .72) 425px);
}
.yt-head {
    display: flex;
    position: absolute;
    top: 27px;
    left: 15px;
    align-items: center;
    gap: 19px;
}
.yt-avatar {
    width: 74px;
    height: 74px;
    border-radius: 50%;
    background: #0a89d3;
    color: #fff;
    font-family: "Liberation Sans", sans-serif;
    font-size: 42px;
    line-height: 74px;
    text-align: center;
}
.yt-title {
    margin-top: 4px;
    font-family: Roboto, sans-serif;
    font-size: 33.7px;
    color: #f4f4f4;
    text-shadow: 0 0 2px rgba(0, 0, 0, .4);
}
.yt-actions {
    display: flex;
    position: absolute;
    top: 27px;
    right: 37px;
    gap: 35px;
}
.yt-action {
    display: flex;
    flex-direction: column;
    align-items: center;
    font-size: 26.5px;
    font-weight: 300;
    line-height: 34px;
    color: rgba(255, 255, 255, .9);
    text-shadow: 0 0 2px rgba(0, 0, 0, .3);
    white-space: nowrap;
}
.yt-action-icon {
    margin-bottom: 14px;
}
.yt-bottom {
    position: absolute;
    left: 0;
    right: 0;
    top: 1006px;
}
.progress {
    display: flex;
    height: 6px;
    margin: 0 29px 0 30px;
    background: rgba(255, 255, 255, .2);
}
.progress-played {
    width: 555px;
    background: #f00;
}
.progress-loaded {
    width: 15px;
    background: rgba(255, 255, 255, .45);
}
.controls {
    display: flex;
    align-items: center;
    height: 34px;
    margin-top: 19px;
    padding-left: 60px;
}
.ctl-volume { margin-left: 44px; }
.ctl-time {
    margin-left: 25px;
    font-family: Roboto, sans-serif;
    font-size: 25px;
    color: #e2e2e2;
    white-space: nowrap;
}
.ctl-cc { margin-left: auto; }
.ctl-gear { margin-left: 33px; }
.ctl-logo {
    width: 97px;
    margin-left: 30px;
    font-family: "Liberation Sans", sans-serif;
    font-weight: 700;
    font-size: 36px;
    color: #fff;
}
.ctl-logo-text {
    display: inline-block;
    transform: scaleX(.69);
    transform-origin: left center;
}
.ctl-exit { margin: 0 48px 0 30px; }
```
